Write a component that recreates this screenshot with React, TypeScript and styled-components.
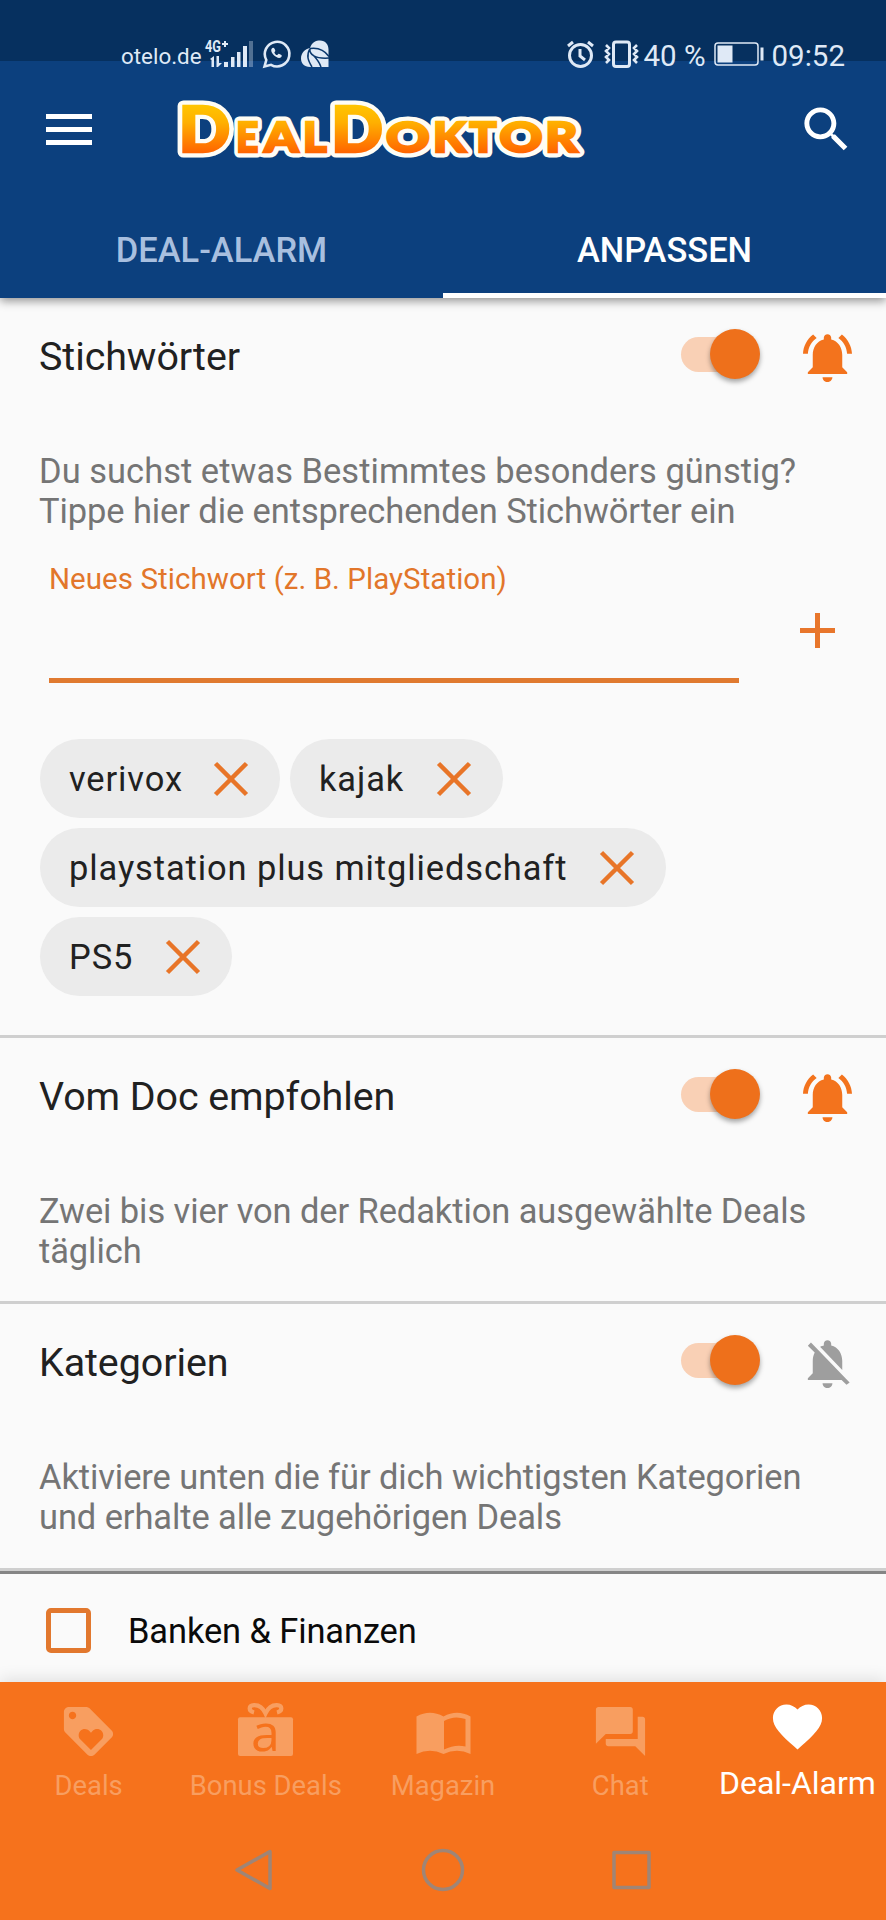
import React from 'react';
import styled, { createGlobalStyle } from 'styled-components';

const Global = createGlobalStyle`
  * { box-sizing: border-box; }
  body { margin: 0; background: #fafafa; font-family: Roboto, "Liberation Sans", sans-serif; }
  svg { display: block; flex: none; overflow: visible; }
`;

const Screen = styled.div`
  width: 886px;
  height: 1920px;
  display: flex;
  flex-direction: column;
  overflow: hidden;
  background: #fafafa;
`;

const Header = styled.header`
  height: 298px;
  flex: none;
  display: flex;
  flex-direction: column;
  background: #0c407e;
  box-shadow: 0 3px 9px rgba(0, 0, 0, 0.42);
  z-index: 1;
`;

const StatusBar = styled.div`
  height: 61px;
  flex: none;
  padding: 20px 41px 0 121px;
  display: flex;
  align-items: flex-start;
  justify-content: space-between;
  background: #06305f;
  color: #dfe9f6;
`;

const StatusGroup = styled.div`
  height: 70px;
  margin-top: -1px;
  display: flex;
  align-items: center;
`;

const StatusText = styled.span<{ $size: number; $left?: number }>`
  font-size: ${(p) => p.$size}px;
  margin-left: ${(p) => p.$left ?? 0}px;
  padding-top: 3px;
  line-height: 36px;
  white-space: nowrap;
`;

const StatusIcon = styled.svg<{ $left: number }>`
  margin-left: ${(p) => p.$left}px;
`;

const Toolbar = styled.div`
  height: 137px;
  display: flex;
  align-items: center;
  padding: 0 30px 0 46px;
`;

const MenuButton = styled.button`
  width: 46px;
  height: 31px;
  padding: 0;
  border: 0;
  background: none;
  display: flex;
  flex-direction: column;
  justify-content: space-between;

  & > span {
    height: 5px;
    width: 46px;
    background: #fff;
  }
`;

const Logo = styled.svg`
  margin-left: 78px;
  font-family: Lato, "Liberation Sans", sans-serif;
  font-weight: 900;
`;

const SearchIcon = styled.svg`
  margin-left: auto;
`;

const Tabs = styled.nav`
  height: 100px;
  display: flex;
`;

const Tab = styled.div<{ $active?: boolean }>`
  flex: 1;
  display: flex;
  align-items: center;
  justify-content: center;
  padding-top: 9px;
  font-size: 34.45px;
  font-weight: 500;
  color: ${(p) => (p.$active ? '#fff' : '#a8bfdf')};
  border-bottom: 5px solid ${(p) => (p.$active ? '#fff' : 'transparent')};
`;

const Content = styled.main`
  flex: 1;
  min-height: 0;
  overflow: hidden;
`;

const Section = styled.section<{ $height: number }>`
  height: ${(p) => p.$height}px;
  border-bottom: 3px solid #cfcfcf;
`;

const SectionHead = styled.div`
  height: 118px;
  padding: 0 29px 0 39px;
  display: flex;
  align-items: center;
`;

const Title = styled.h2`
  margin: 0;
  flex: 1;
  font-size: 39.4px;
  font-weight: 400;
  letter-spacing: -0.06px;
  color: #212121;
  line-height: 46px;
  padding-bottom: 1px;
`;

const Track = styled.div`
  width: 75px;
  height: 35px;
  margin: 0 42px 6px 0;
  border-radius: 18px;
  background: #f9d0b5;
  display: flex;
  align-items: center;
`;

const Thumb = styled.div`
  width: 50px;
  height: 50px;
  flex: none;
  margin-left: 29px;
  border-radius: 50%;
  background: #ee701b;
  box-shadow: 0 3px 5px rgba(0, 0, 0, 0.35);
`;

const Description = styled.p`
  margin: 0;
  padding: 35px 39px 0;
  font-size: 34.45px;
  letter-spacing: -0.08px;
  line-height: 40.3px;
  color: #757575;
  white-space: nowrap;
`;

const WideLine = styled.span`
  letter-spacing: 0.04px;
`;

const KeywordRow = styled.div`
  display: flex;
  padding: 26px 49px 0;
`;

const Field = styled.label`
  width: 690px;
  height: 125px;
  padding-top: 1px;
  border-bottom: 5px solid #e07a30;
  font-size: 29.5px;
  letter-spacing: 0.05px;
  line-height: 40px;
  color: #e2762a;
  white-space: nowrap;
`;

const PlusIcon = styled.svg`
  margin: 55px 0 0 61px;
`;

const Chips = styled.div`
  display: flex;
  flex-wrap: wrap;
  gap: 10px;
  padding: 56px 200px 0 40px;
`;

const Chip = styled.div<{ $width: number }>`
  width: ${(p) => p.$width}px;
  height: 79px;
  padding: 1px 32px 0 29px;
  border-radius: 40px;
  background: #ebebeb;
  display: flex;
  align-items: center;
  justify-content: space-between;
  font-size: 34.45px;
  letter-spacing: 0.9px;
  color: #212121;
  white-space: nowrap;
`;

const CategoryRow = styled.div`
  height: 114px;
  border-top: 3px solid #858585;
  padding: 2px 46px 0;
  display: flex;
  align-items: center;
  gap: 37px;
  font-size: 34.45px;
  letter-spacing: -0.1px;
  color: #0a0a0a;
`;

const Checkbox = styled.span`
  width: 45px;
  height: 45px;
  border: 5px solid #e2782e;
  border-radius: 5px;
`;

const Footer = styled.footer`
  height: 238px;
  flex: none;
  background: #f6721c;
  box-shadow: 0 -2px 16px rgba(0, 0, 0, 0.12);
  z-index: 1;
`;

const BottomNav = styled.nav`
  height: 138px;
  display: flex;
`;

const NavItem = styled.div<{ $active?: boolean }>`
  flex: 1 1 0;
  min-width: 0;
  padding-top: ${(p) => (p.$active ? 15 : 20)}px;
  display: flex;
  flex-direction: column;
  align-items: center;
  font-size: ${(p) => (p.$active ? 32 : 27.4)}px;
  color: ${(p) => (p.$active ? '#fff' : '#f89e60')};
`;

const NavLabel = styled.span<{ $active?: boolean }>`
  margin-top: ${(p) => (p.$active ? 9 : 7)}px;
  line-height: 36px;
  white-space: nowrap;
`;

const SystemNav = styled.div`
  height: 100px;
  display: flex;
  justify-content: center;
  align-items: center;
  gap: 146px;
`;

const ACTIVE_BELL =
  'M7.58 4.08L6.15 2.65C3.75 4.48 2.17 7.3 2.03 10.5h2c.15-2.65 1.51-4.97 3.55-6.42zm12.39 6.42h2c-.15-3.2-1.73-6.02-4.12-7.85l-1.42 1.43c2.02 1.45 3.39 3.77 3.54 6.42zM18 11c0-3.07-1.64-5.64-4.5-6.32V4c0-.83-.67-1.5-1.5-1.5s-1.5.67-1.5 1.5v.68C7.63 5.36 6 7.92 6 11v5l-2 2v.7h16V18l-2-2v-5zm-6 11c.14 0 .27-.01.4-.04.65-.14 1.18-.58 1.44-1.18.1-.24.15-.5.15-.78h-4c.01 1.1.9 2 2.01 2z';
const MUTED_BELL =
  'M20 18.69L7.84 6.14 5.27 3.49 4 4.76l2.8 2.8v.01c-.52.99-.8 2.16-.8 3.42v5l-2 2v.7h13.73l2 2L21 19.72l-1-1.03zM12 22c1.11 0 2-.89 2-2h-4c0 1.11.89 2 2 2zm6-7.32V11c0-3.08-1.64-5.64-4.5-6.32V4c0-.83-.67-1.5-1.5-1.5s-1.5.67-1.5 1.5v.68c-.15.03-.29.08-.42.12-.1.03-.2.07-.3.11h-.01c-.01 0-.01 0-.02.01-.23.09-.46.2-.68.31 0 0-.01 0-.01.01L18 14.68z';
const TAG =
  'M21.41 11.58l-9-9C12.05 2.22 11.55 2 11 2H4c-1.1 0-2 .9-2 2v7c0 .55.22 1.05.59 1.42l9 9c.36.36.86.58 1.41.58.55 0 1.05-.22 1.41-.59l7-7c.37-.36.59-.86.59-1.41 0-.55-.23-1.06-.59-1.42zM5.5 7C4.67 7 4 6.33 4 5.5S4.67 4 5.5 4 7 4.67 7 5.5 6.33 7 5.5 7zm11.77 8.27L13 19.54l-4.27-4.27C8.28 14.81 8 14.19 8 13.5c0-1.38 1.12-2.5 2.5-2.5.69 0 1.32.28 1.77.74l.73.72.73-.73c.45-.45 1.08-.73 1.77-.73 1.38 0 2.5 1.12 2.5 2.5 0 .69-.28 1.32-.73 1.77z';
const FORUM =
  'M21 6h-2v9H6v2c0 .55.45 1 1 1h11l4 4V7c0-.55-.45-1-1-1zm-4 6V3c0-.55-.45-1-1-1H3c-.55 0-1 .45-1 1v14l4-4h10c.55 0 1-.45 1-1z';
const HEART =
  'M12 21.35l-1.45-1.32C5.4 15.36 2 12.28 2 8.5 2 5.42 4.42 3 7.5 3c1.74 0 3.41.81 4.5 2.09C13.09 3.81 14.76 3 16.5 3 19.58 3 22 5.42 22 8.5c0 3.78-3.4 6.86-8.55 11.54L12 21.35z';
const HANDSET =
  'M10 7.800c-.6 0-1.800.9-1.800 2.500 0 3.200 4.600 7.600 7.900 7.600 1.600 0 2.700-1.100 2.700-2.100 0-.8-2.500-2-3.100-2-.6 0-1 1.300-1.600 1.300-.9 0-2.700-1.800-2.700-2.700 0-.4.9-.9.900-1.600 0-.7-.9-3-2.300-3z';

const Glyph = ({ d, color = 'currentColor' }: { d: string; color?: string }) => (
  <svg width="59" height="59" viewBox="0 0 24 24" fill={color}>
    <path d={d} />
  </svg>
);

const GiftIcon = () => (
  <svg width="59" height="59" viewBox="0 0 59 59">
    <rect x="2" y="15.300" width="55" height="38.700" rx="2" fill="currentColor" />
    <path
      d="M18 10.500C12 9 12.500 3.500 18 3.200C23 3 27 6 29.500 11.500C32 6 36 3 41 3.200C46.500 3.500 47 9 41 10.500"
      fill="none"
      stroke="currentColor"
      strokeWidth="4.200"
    />
    <text x="29.500" y="49" textAnchor="middle" fontFamily="Open Sans" fontSize="52" fill="#f6721c">
      a
    </text>
  </svg>
);

const BookIcon = () => (
  <svg width="59" height="59" viewBox="0 0 59 59">
    <path
      d="M2.500 14.500Q16 7 29.500 14.500Q43 7 56.500 14.500V52Q43 45.500 29.500 52Q16 45.500 2.500 52ZM30 19V47.500Q41 42 51.500 44.500V17Q40 13 30 19Z"
      fill="currentColor"
      fillRule="evenodd"
    />
  </svg>
);

const CloseIcon = () => (
  <svg width="34" height="34" viewBox="0 0 34 34" stroke="#e87528" strokeWidth="4.500">
    <path d="M1.500 1.500L32.500 32.500M32.500 1.500L1.500 32.500" />
  </svg>
);

const Switch = () => (
  <Track role="switch" aria-checked>
    <Thumb />
  </Track>
);

const Head = ({ title, muted }: { title: string; muted?: boolean }) => (
  <SectionHead>
    <Title>{title}</Title>
    <Switch />
    <Glyph d={muted ? MUTED_BELL : ACTIVE_BELL} color={muted ? '#9e9e9e' : '#f3731d'} />
  </SectionHead>
);

const logoLetters = [
  { char: 'D', x: 178.6, width: 51.8, size: 62 },
  { char: 'E', x: 236.2, width: 22, size: 42.5 },
  { char: 'A', x: 264.3, width: 34, size: 42.5 },
  { char: 'L', x: 302.9, width: 23.6, size: 42.5 },
  { char: 'D', x: 330.9, width: 52, size: 62 },
  { char: 'O', x: 386.1, width: 43.7, size: 42.5 },
  { char: 'K', x: 433, width: 32.7, size: 42.5 },
  { char: 'T', x: 469.4, width: 27, size: 42.5 },
  { char: 'O', x: 499.4, width: 43, size: 42.5 },
  { char: 'R', x: 545.3, width: 32.4, size: 42.5 },
];

const keywords = [
  { text: 'verivox', width: 240 },
  { text: 'kajak', width: 213 },
  { text: 'playstation plus mitgliedschaft', width: 626 },
  { text: 'PS5', width: 192 },
];

const navItems = [
  { label: 'Deals', icon: <Glyph d={TAG} /> },
  { label: 'Bonus Deals', icon: <GiftIcon /> },
  { label: 'Magazin', icon: <BookIcon /> },
  { label: 'Chat', icon: <Glyph d={FORUM} /> },
  { label: 'Deal-Alarm', icon: <Glyph d={HEART} />, active: true },
];

export default function App() {
  return (
    <>
      <Global />
      <Screen>
        <Header>
          <StatusBar>
            <StatusGroup>
              <StatusText $size={22.4}>otelo.de</StatusText>
              <StatusIcon $left={3} width="48" height="28" viewBox="0 0 48 28" fill="currentColor">
                <text x="0" y="12" fontSize="16" fontWeight="700" textLength="16" lengthAdjust="spacingAndGlyphs">
                  4G
                </text>
                <path d="M17 3h2V1h2v2h2v2h-2v2h-2V5h-2z" />
                <path d="M5 19l4-3v11H6.500v-7zM11.500 16h2.500v7h3l-4 4h-1.500zM19 22h4v5h-4zM26 17h3.500v10H26zM32 12h3.500v15H32zM38 6h4v21h-4z" />
                <path d="M44 1h4v26h-4z" opacity=".35" />
              </StatusIcon>
              <StatusIcon $left={10} width="28" height="28" viewBox="0 0 28 28">
                <path d="M1.500 26.500l1.800-6.500A12.300 12.300 0 1 1 8 24.800z" fill="none" stroke="currentColor" strokeWidth="2.600" />
                <path d={HANDSET} fill="currentColor" />
              </StatusIcon>
              <StatusIcon $left={10} width="28" height="28" viewBox="0 0 28 28">
                <path
                  d="M9 8C11 2 15 .5 19 .5c5.500 0 8.500 4 8.500 9V27H9C3 27 0 23 0 18.500 0 13 4 9 9 8z"
                  fill="currentColor"
                />
                <path
                  d="M9 8.500c7-1 14 1 19 8M9 8.500c-1 6 5 10.500 19 9.500M9 8.500c-4 7-2 12 2 18.500M12 15c3 3 6 6 8 12"
                  fill="none"
                  stroke="#0a386d"
                  strokeWidth="1.500"
                />
              </StatusIcon>
            </StatusGroup>
            <StatusGroup>
              <StatusIcon $left={0} width="27" height="28" viewBox="0 0 27 28" fill="none" stroke="currentColor" strokeWidth="3">
                <circle cx="13.500" cy="15.500" r="11" />
                <path d="M13 9v7l5 4M1 6l5-4M26 6l-5-4" />
              </StatusIcon>
              <StatusIcon $left={10} width="35" height="28" viewBox="0 0 35 28" fill="none" stroke="currentColor" strokeWidth="3">
                <rect x="9.500" y="2" width="16" height="24.500" rx="2.500" />
                <path d="M2 5l3 3-3 3 3 3-3 3 3 3-3 3M33 5l-3 3 3 3-3 3 3 3-3 3 3 3" strokeWidth="2.600" />
              </StatusIcon>
              <StatusText $size={29.5} $left={4}>40 %</StatusText>
              <StatusIcon $left={8} width="50" height="24" viewBox="0 0 50 24">
                <rect x="1" y="1" width="43" height="22" rx="3" fill="none" stroke="currentColor" strokeWidth="1.500" />
                <path d="M3.500 3.500h15v17h-15zM46.500 5.500h3v13h-3z" fill="currentColor" />
              </StatusIcon>
              <StatusText $size={29.5} $left={8}>09:52</StatusText>
            </StatusGroup>
          </StatusBar>
          <Toolbar>
            <MenuButton aria-label="Menu">
              <span />
              <span />
              <span />
            </MenuButton>
            <Logo width="420" height="70" viewBox="170 95 420 70">
              <defs>
                <linearGradient id="gold" gradientUnits="userSpaceOnUse" x1="0" y1="106" x2="0" y2="153">
                  <stop offset="0" stopColor="#ffc400" />
                  <stop offset="0.350" stopColor="#ffb000" />
                  <stop offset="1" stopColor="#ff6400" />
                </linearGradient>
              </defs>
              <use href="#wordmark" fill="#fffdf5" stroke="#fffdf5" strokeWidth="11" strokeLinejoin="round" />
              <g fill="url(#gold)" stroke="url(#gold)" strokeWidth="2.500">
                <text id="wordmark" y="151.800">
                  {logoLetters.map((l) => (
                    <tspan key={l.x} x={l.x} fontSize={l.size} textLength={l.width} lengthAdjust="spacingAndGlyphs">
                      {l.char}
                    </tspan>
                  ))}
                </text>
              </g>
            </Logo>
            <SearchIcon width="59" height="59" viewBox="0 0 24 24" fill="#fff">
              <path d="M15.500 14h-.79l-.28-.27C15.410 12.590 16 11.110 16 9.500 16 5.910 13.090 3 9.500 3S3 5.910 3 9.500 5.910 16 9.500 16c1.610 0 3.090-.59 4.230-1.570l.27.28v.79l5 4.990L20.490 19l-4.990-5zm-6 0C7.010 14 5 11.990 5 9.500S7.010 5 9.500 5 14 7.010 14 9.500 11.990 14 9.500 14z" />
            </SearchIcon>
          </Toolbar>
          <Tabs>
            <Tab>DEAL-ALARM</Tab>
            <Tab $active>ANPASSEN</Tab>
          </Tabs>
        </Header>

        <Content>
          <Section $height={740}>
            <Head title="Stichwörter" />
            <Description>
              <WideLine>Du suchst etwas Bestimmtes besonders günstig?</WideLine>
              <br />
              Tippe hier die entsprechenden Stichwörter ein
            </Description>
            <KeywordRow>
              <Field>Neues Stichwort (z. B. PlayStation)</Field>
              <PlusIcon width="35" height="35" viewBox="0 0 35 35" stroke="#e8762b" strokeWidth="5">
                <path d="M17.500 0V35M0 17.500H35" />
              </PlusIcon>
            </KeywordRow>
            <Chips>
              {keywords.map((k) => (
                <Chip key={k.text} $width={k.width}>
                  {k.text}
                  <CloseIcon />
                </Chip>
              ))}
            </Chips>
          </Section>
          <Section $height={266}>
            <Head title="Vom Doc empfohlen" />
            <Description>
              Zwei bis vier von der Redaktion ausgewählte Deals
              <br />
              täglich
            </Description>
          </Section>
          <Section $height={267}>
            <Head title="Kategorien" muted />
            <Description>
              Aktiviere unten die für dich wichtigsten Kategorien
              <br />
              und erhalte alle zugehörigen Deals
            </Description>
          </Section>
          <CategoryRow>
            <Checkbox role="checkbox" aria-checked={false} />
            Banken &amp; Finanzen
          </CategoryRow>
        </Content>

        <Footer>
          <BottomNav>
            {navItems.map((item) => (
              <NavItem key={item.label} $active={item.active}>
                {item.icon}
                <NavLabel $active={item.active}>{item.label}</NavLabel>
              </NavItem>
            ))}
          </BottomNav>
          <SystemNav>
            <svg width="42" height="42" viewBox="0 0 42 42" fill="none" stroke="#9f8576" strokeWidth="3.500" strokeLinejoin="round">
              <path d="M36 2.500V39.500L3 21z" />
            </svg>
            <svg width="42" height="42" viewBox="0 0 42 42" fill="none" stroke="#9f8576" strokeWidth="3.500">
              <circle cx="21" cy="21" r="19.500" />
            </svg>
            <svg width="42" height="42" viewBox="0 0 42 42" fill="none" stroke="#9f8576" strokeWidth="3.500" strokeLinejoin="round">
              <rect x="4" y="3.500" width="35" height="35" />
            </svg>
          </SystemNav>
        </Footer>
      </Screen>
    </>
  );
}
